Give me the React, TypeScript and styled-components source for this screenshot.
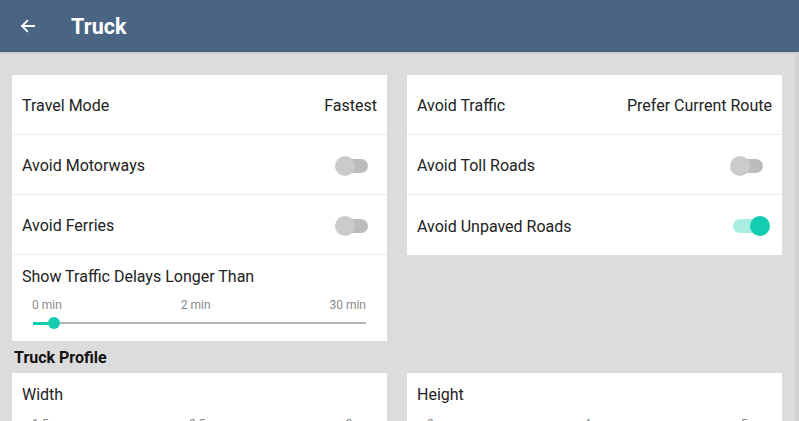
import React from "react";
import styled, { createGlobalStyle } from "styled-components";

const Global = createGlobalStyle`
  html, body { margin: 0; padding: 0; }
  body {
    background: #dcdcdc;
    font-family: Roboto, "Noto Sans", Arial, sans-serif;
    color: #222;
    overflow: hidden;
  }
`;

const Page = styled.div`
  width: 799px;
  height: 421px;
  display: flex;
  flex-direction: column;
  overflow: hidden;
`;

const Header = styled.header`
  height: 52px;
  flex: none;
  background: #4a6584;
  display: flex;
  align-items: center;
  padding-left: 19px;
  gap: 34px;
  color: #fff;
  box-shadow: 0 1px 2px rgba(0, 0, 0, 0.12);
`;

const Title = styled.h1`
  margin: 0;
  font-size: 21.5px;
  font-weight: 700;
  letter-spacing: 0.1px;
`;

const Body = styled.main`
  flex: 1;
  display: flex;
  flex-direction: column;
  padding: 23px 17px 0 12px;
  border-right: 4px solid #d2d2d2;
`;

const Grid = styled.div`
  display: grid;
  grid-template-columns: 375px 375px;
  column-gap: 20px;
  align-items: start;
`;

const Card = styled.section`
  background: #fff;
  display: flex;
  flex-direction: column;
`;

const Row = styled.div<{ $last?: boolean }>`
  height: 60px;
  display: flex;
  align-items: center;
  justify-content: space-between;
  padding: 2px 10px 0 10px;
  font-size: 16px;
  border-bottom: ${(p) => (p.$last ? "none" : "1px solid #ececec")};
  box-sizing: border-box;
`;

const Value = styled.span`
  font-size: 16px;
  color: #222;
`;

const SwitchBox = styled.div`
  position: relative;
  width: 36px;
  height: 20px;
  margin-right: 6px;
`;

const Track = styled.div<{ $on: boolean }>`
  position: absolute;
  left: 3px;
  top: 3px;
  width: 30px;
  height: 14px;
  border-radius: 7px;
  background: ${(p) => (p.$on ? "#a9ece1" : "#bcbcbc")};
`;

const Thumb = styled.div<{ $on: boolean }>`
  position: absolute;
  top: 0;
  left: ${(p) => (p.$on ? "20px" : "0")};
  width: 20px;
  height: 20px;
  border-radius: 50%;
  background: ${(p) => (p.$on ? "#14cdb1" : "#cbcbcb")};
`;

const SliderRow = styled.div`
  display: flex;
  flex-direction: column;
  padding: 12px 10px 0 10px;
  height: 86px;
  box-sizing: border-box;
`;

const SliderTitle = styled.div`
  font-size: 16px;
  line-height: 20px;
`;

const SliderLabels = styled.div<{ $offset?: number }>`
  display: flex;
  justify-content: space-between;
  font-size: 12px;
  color: #8a8a8a;
  padding: 0 11px 0 10px;
  margin-top: ${(p) => p.$offset ?? 11}px;
  line-height: 14px;
`;

const SliderTrack = styled.div`
  position: relative;
  height: 2px;
  background: #b5b5b5;
  margin: 10px 11px 0 11px;
`;

const SliderFill = styled.div`
  position: absolute;
  left: 0;
  top: -0.5px;
  height: 3px;
  background: #14cdb1;
`;

const SliderThumb = styled.div`
  position: absolute;
  top: -5px;
  width: 12px;
  height: 12px;
  margin-left: -6px;
  border-radius: 50%;
  background: #14cdb1;
`;

const SectionTitle = styled.h2`
  margin: 0;
  height: 32px;
  display: flex;
  align-items: center;
  padding-left: 2px;
  font-size: 16px;
  font-weight: 700;
  color: #111;
`;

const ProfileRow = styled.div`
  display: flex;
  flex-direction: column;
  padding: 12px 10px 0 10px;
  height: 60px;
  box-sizing: border-box;
`;

const Switch = ({ on }: { on: boolean }) => (
  <SwitchBox>
    <Track $on={on} />
    <Thumb $on={on} />
  </SwitchBox>
);

const Slider = ({ labels, pct }: { labels: string[]; pct: number }) => (
  <>
    <SliderLabels>
      {labels.map((l) => (
        <span key={l}>{l}</span>
      ))}
    </SliderLabels>
    <SliderTrack>
      <SliderFill style={{ width: `${pct}%` }} />
      <SliderThumb style={{ left: `${pct}%` }} />
    </SliderTrack>
  </>
);

export default function App() {
  return (
    <Page>
      <Global />
      <Header>
        <svg width="18" height="18" viewBox="0 0 24 24" fill="none">
          <path
            d="M20 12H4M11 5l-7 7 7 7"
            stroke="#fff"
            strokeWidth="2.4"
            strokeLinecap="square"
          />
        </svg>
        <Title>Truck</Title>
      </Header>
      <Body>
        <Grid>
          <Card>
            <Row>
              Travel Mode <Value>Fastest</Value>
            </Row>
            <Row>
              Avoid Motorways <Switch on={false} />
            </Row>
            <Row>
              Avoid Ferries <Switch on={false} />
            </Row>
            <SliderRow>
              <SliderTitle>Show Traffic Delays Longer Than</SliderTitle>
              <Slider labels={["0 min", "2 min", "30 min"]} pct={6.3} />
            </SliderRow>
          </Card>
          <Card>
            <Row>
              Avoid Traffic <Value>Prefer Current Route</Value>
            </Row>
            <Row>
              Avoid Toll Roads <Switch on={false} />
            </Row>
            <Row $last>
              Avoid Unpaved Roads <Switch on={true} />
            </Row>
          </Card>
        </Grid>
        <SectionTitle>Truck Profile</SectionTitle>
        <Grid>
          <Card>
            <ProfileRow>
              <SliderTitle>Width</SliderTitle>
              <SliderLabels $offset={12}>
                <span>1.5 m</span>
                <span>2.5 m</span>
                <span>3 m</span>
              </SliderLabels>
            </ProfileRow>
          </Card>
          <Card>
            <ProfileRow>
              <SliderTitle>Height</SliderTitle>
              <SliderLabels $offset={12}>
                <span>2 m</span>
                <span>4 m</span>
                <span>5 m</span>
              </SliderLabels>
            </ProfileRow>
          </Card>
        </Grid>
      </Body>
    </Page>
  );
}
